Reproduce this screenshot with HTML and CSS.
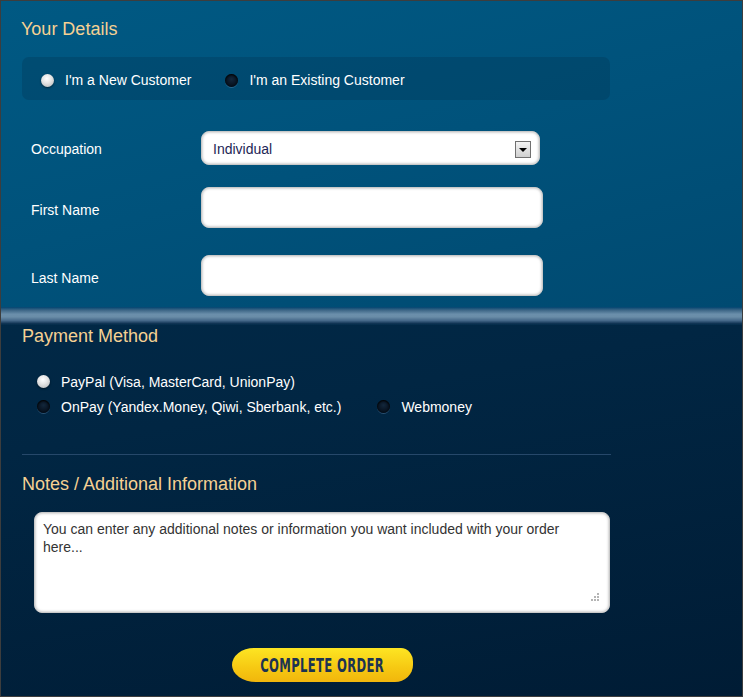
FILE: index.html
```html
<!DOCTYPE html>
<html lang="en">
<head>
  <meta charset="UTF-8" />
  <meta name="viewport" content="width=device-width, initial-scale=1.0" />
  <title>Checkout</title>
  <link rel="stylesheet" href="styles.css">
</head>
<body>
  <div class="order">
    <!-- Your details -->
    <section class="details">
      <h2 class="heading">Your Details</h2>
      <div class="customer-type">
        <label class="radio"><input type="radio" name="customer" checked /><span>I'm a New Customer</span></label>
        <label class="radio"><input type="radio" name="customer" /><span>I'm an Existing Customer</span></label>
      </div>

      <div class="field field-first">
        <label>Occupation</label>
        <div class="select"><span>Individual</span><span class="arrow"></span></div>
      </div>
      <div class="field field-second">
        <label>First Name</label>
        <input type="text" class="text-input" />
      </div>
      <div class="field field-third">
        <label>Last Name</label>
        <input type="text" class="text-input" />
      </div>
    </section>

    <div class="band"></div>

    <!-- Payment -->
    <section class="payment">
      <h2 class="heading">Payment Method</h2>
      <div class="methods">
        <div class="method-row">
          <label class="radio"><input type="radio" name="pay" checked /><span>PayPal (Visa, MasterCard, UnionPay)</span></label>
        </div>
        <div class="method-row">
          <label class="radio"><input type="radio" name="pay" /><span>OnPay (Yandex.Money, Qiwi, Sberbank, etc.)</span></label>
          <label class="radio"><input type="radio" name="pay" /><span>Webmoney</span></label>
        </div>
      </div>

      <hr class="rule" />

      <h2 class="heading notes-heading">Notes / Additional Information</h2>
      <div class="notes-box">
        <textarea class="notes">You can enter any additional notes or information you want included with your order here...</textarea>
        <svg class="grip" width="9" height="9" viewBox="0 0 9 9">
          <rect x="6" y="0" width="2" height="2" fill="#b4b4b4" />
          <rect x="3" y="3" width="2" height="2" fill="#b4b4b4" />
          <rect x="6" y="3" width="2" height="2" fill="#b4b4b4" />
          <rect x="0" y="6" width="2" height="2" fill="#b4b4b4" />
          <rect x="3" y="6" width="2" height="2" fill="#b4b4b4" />
          <rect x="6" y="6" width="2" height="2" fill="#b4b4b4" />
        </svg>
      </div>

      <div class="actions">
        <button class="complete"><span>COMPLETE ORDER</span></button>
      </div>
    </section>
  </div>
</body>
</html>
```

FILE: styles.css
```css
body { margin: 0; font-family: "Liberation Sans", Arial, sans-serif; background: #3c3c3c; }
.order { width: 743px; height: 697px; box-sizing: border-box; border: 1px solid #3d3d3d; overflow: hidden; background: linear-gradient(170deg, #012e4e 0%, #012643 55%, #001c35 100%); }

.heading { margin: 0; font-size: 18px; line-height: 22px; font-weight: normal; color: #f5d193; }

.details { padding: 17px 0 11px 20px; background: linear-gradient(165deg, #005983 0%, #00527b 50%, #004a71 100%); }
.details .heading { margin-bottom: 17px; }

.customer-type { margin-left: 1px; width: 588px; height: 43px; box-sizing: border-box; padding: 3px 19px 0; display: flex; align-items: center; gap: 34px; background: rgba(0, 25, 50, 0.18); border-radius: 7px; }

.radio { display: flex; align-items: center; gap: 11px; color: #fff; font-size: 14px; cursor: pointer; }
.radio input { appearance: none; -webkit-appearance: none; margin: 0; width: 13px; height: 13px; border-radius: 50%; background: radial-gradient(circle at 50% 40%, #13273c, #050f1b 70%); box-shadow: 0 1px 0 rgba(120, 160, 200, 0.35), inset 0 1px 2px #000; }
.radio input:checked { background: radial-gradient(circle at 45% 35%, #ffffff 0%, #e6e6e6 40%, #b2b2b2 100%); box-shadow: 0 1px 2px rgba(0, 0, 0, 0.5); }

.field { display: flex; align-items: center; padding-left: 10px; }
.field label { width: 170px; flex: none; color: #fff; font-size: 14px; padding-top: 4px; }
.field-first { margin-top: 31px; }
.field-first label { padding-top: 2px; }
.field-second { margin-top: 22px; }
.field-third { margin-top: 27px; }

.select { width: 339px; height: 34px; box-sizing: border-box; display: flex; align-items: center; padding: 2px 8px 0 11px; background: #fff; border: 1px solid #c9c9c9; border-radius: 8px; box-shadow: inset 0 0 3px rgba(0, 0, 0, 0.35); color: #1d2556; font-size: 14px; }
.select .arrow { margin-left: auto; width: 16px; height: 17px; box-sizing: border-box; border: 1px solid #707070; background: linear-gradient(#f4f4f4, #cfcfcf); display: flex; align-items: center; justify-content: center; }
.select .arrow::after { content: ""; border-left: 4px solid transparent; border-right: 4px solid transparent; border-top: 4px solid #000; margin-top: 2px; }

.text-input { width: 342px; height: 41px; box-sizing: border-box; margin: 0; padding: 0 10px; background: #fff; border: 1px solid #c9c9c9; border-radius: 8px; box-shadow: inset 0 0 3px rgba(0, 0, 0, 0.35); font-size: 14px; font-family: inherit; outline: none; }

.band { height: 18px; background: linear-gradient(to bottom, #024470 0%, #3e6787 18%, #6b8fab 40%, #6a8da8 55%, #46698a 75%, #0f3353 92%, #022c4b 100%); }

.payment { padding-left: 21px; }
.methods { margin-top: 22px; padding-left: 15px; }
.method-row { height: 25px; display: flex; align-items: center; gap: 36px; }

.rule { margin: 35px 0 0; width: 589px; height: 0; border: 0; border-top: 1px solid #26486a; }

.notes-heading { margin-top: 18px; }
.notes-box { position: relative; margin: 17px 0 0 12px; width: 576px; height: 101px; }
.notes { display: block; width: 100%; height: 100%; box-sizing: border-box; padding: 7px 8px; background: #fff; border: 1px solid #c9c9c9; border-radius: 8px; box-shadow: inset 0 0 3px rgba(0, 0, 0, 0.35); color: #333; font-family: inherit; font-size: 14px; line-height: 18px; outline: none; resize: none; }
.grip { position: absolute; right: 10px; bottom: 11px; }

.actions { margin-top: 35px; padding-left: 210px; }
.complete { width: 181px; height: 34px; padding: 0; border: 0; border-radius: 22px 12px 18px 24px / 17px 14px 17px 17px; background: linear-gradient(#fde523, #f6c812 60%, #f1b60c); color: #1c3352; cursor: pointer; display: flex; align-items: center; justify-content: center; }
.complete span { display: inline-block; font-family: "DejaVu Sans Condensed", "DejaVu Sans", sans-serif; font-weight: bold; font-size: 19px; letter-spacing: 0.5px; transform: scaleX(0.68); white-space: nowrap; }
```
